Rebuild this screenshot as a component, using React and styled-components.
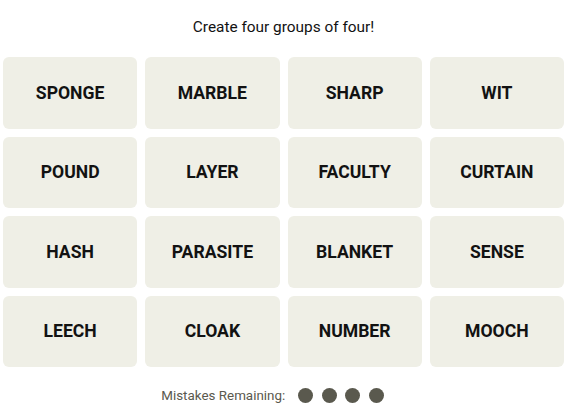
import React from "react";
import styled, { createGlobalStyle } from "styled-components";

const Global = createGlobalStyle`
  html, body { margin: 0; padding: 0; background: #ffffff; }
  body { font-family: Roboto, "Liberation Sans", sans-serif; color: #121212; }
`;

const Page = styled.main`
  width: 567px;
  height: 405px;
  box-sizing: border-box;
  padding: 0 3px;
  display: flex;
  flex-direction: column;
  overflow: hidden;
`;

const Title = styled.p`
  margin: 17px 0 0;
  text-align: center;
  font-size: 15.4px;
  line-height: 20px;
  font-weight: 400;
  color: #121212;
`;

const Board = styled.section`
  margin-top: 20px;
  display: grid;
  grid-template-columns: repeat(4, 1fr);
  grid-auto-rows: 71.5px;
  gap: 8px;
`;

const Tile = styled.button`
  border: none;
  border-radius: 6px;
  background: #efefe6;
  color: #121212;
  font-family: Roboto, "Liberation Sans", sans-serif;
  font-weight: 700;
  font-size: 17.6px;
  text-transform: uppercase;
  display: flex;
  align-items: center;
  justify-content: center;
  padding: 0;
  cursor: pointer;
`;

const Mistakes = styled.div`
  margin-top: 21px;
  display: flex;
  align-items: center;
  justify-content: center;
  gap: 13px;
  padding-right: 22px;
  font-size: 13.4px;
  color: #5a594e;
`;

const Dots = styled.div`
  display: flex;
  gap: 8.5px;
`;

const Dot = styled.span`
  width: 15px;
  height: 15px;
  border-radius: 50%;
  background: #5a594e;
`;

const words = [
  "SPONGE", "MARBLE", "SHARP", "WIT",
  "POUND", "LAYER", "FACULTY", "CURTAIN",
  "HASH", "PARASITE", "BLANKET", "SENSE",
  "LEECH", "CLOAK", "NUMBER", "MOOCH",
];

export default function App() {
  return (
    <>
      <Global />
      <Page>
        <Title>Create four groups of four!</Title>
        <Board>
          {words.map((w) => (
            <Tile key={w}>{w}</Tile>
          ))}
        </Board>
        <Mistakes>
          <span>Mistakes Remaining:</span>
          <Dots>
            {[0, 1, 2, 3].map((i) => (
              <Dot key={i} />
            ))}
          </Dots>
        </Mistakes>
      </Page>
    </>
  );
}
